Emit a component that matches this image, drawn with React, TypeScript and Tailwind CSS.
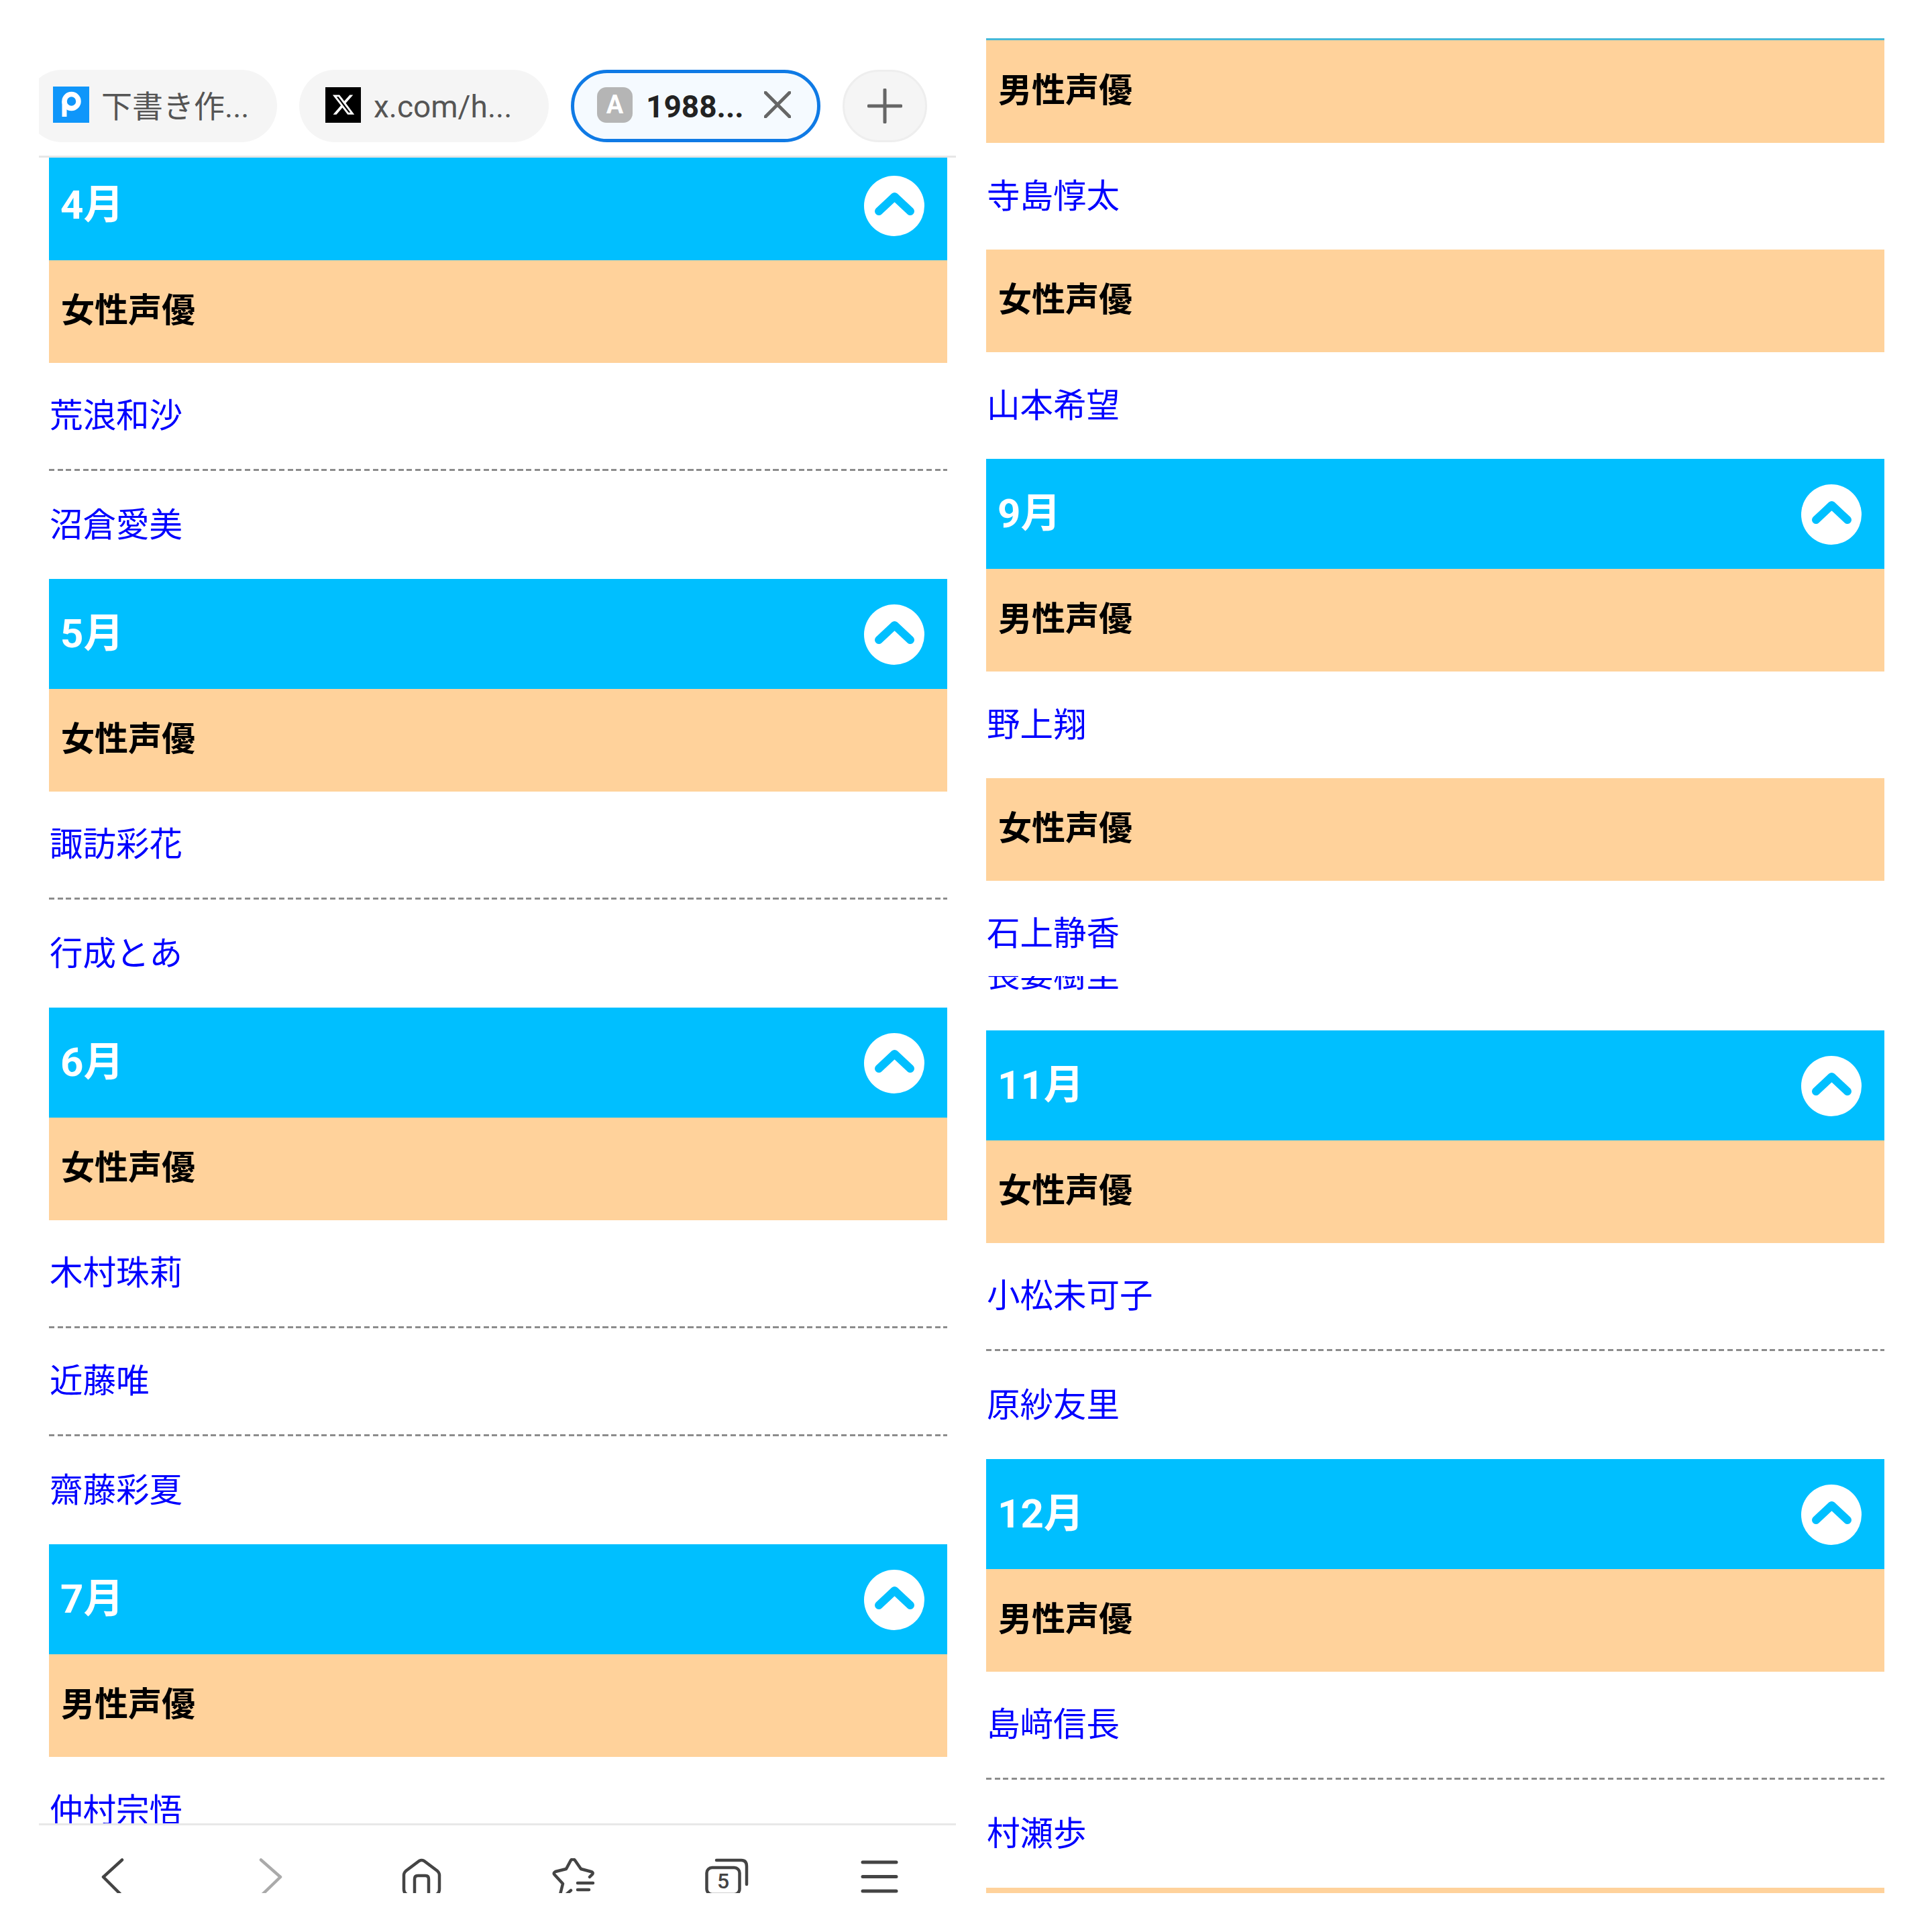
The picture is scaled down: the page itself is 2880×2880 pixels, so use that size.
import React from "react";

function Month({ label }: { label: string }) {
  return (
    <div className="h-[164px] shrink-0 bg-[#00bfff] flex items-center justify-between pl-[17px] pr-[34px]">
      <span className="text-[60px] leading-none font-bold text-white -mt-[1px]">{label}</span>
      <div className="w-[90px] h-[90px] mt-[2px] rounded-full bg-white">
        <svg viewBox="0 0 90 90" className="w-[90px] h-[90px]">
          <path d="M22 53 L45.5 31 L69 53" fill="none" stroke="#00bfff" strokeWidth="12" strokeLinecap="round" strokeLinejoin="round" />
        </svg>
      </div>
    </div>
  );
}

function Category({ label, className = "" }: { label: string; className?: string }) {
  return (
    <div className={`h-[153px] shrink-0 bg-[#ffd29b] flex items-center pl-[18px] ${className}`}>
      <span className="text-[50px] leading-none font-bold text-black -mt-[3px]">{label}</span>
    </div>
  );
}

function Name({ label, dashed = false, className = "h-[161px]" }: { label: string; dashed?: boolean; className?: string }) {
  return (
    <div className={`shrink-0 flex flex-col ${className}`}>
      <div className="flex-1 flex items-center pl-[1px]">
        <span className="text-[49.5px] leading-none text-[#0000ff] mt-[2px]">{label}</span>
      </div>
      {dashed && <div className="h-[3px] bg-[repeating-linear-gradient(90deg,#8c8c8c_0,#8c8c8c_8px,transparent_8px,transparent_12.7px)]" />}
    </div>
  );
}

function Tabs() {
  return (
    <div className="h-[235px] shrink-0 pt-[104px] border-b-[3px] border-[#e6e6e6] overflow-hidden">
      <div className="flex h-[108px] gap-[33px] -ml-[19px]">
        <div className="w-[374px] shrink-0 rounded-[54px] bg-[#f5f5f5] flex items-center pl-[40px] gap-[18px]">
          <svg viewBox="0 0 54 54" className="w-[54px] h-[54px] -mt-[4px] shrink-0">
            <rect width="54" height="54" fill="#0f96fa" />
            <circle cx="27.5" cy="22" r="10.5" fill="none" stroke="#ffffff" strokeWidth="7.5" />
            <path d="M17 22 V45" stroke="#ffffff" strokeWidth="7" />
          </svg>
          <span className="text-[46px] leading-none text-[#555555] mt-[2px]">下書き作...</span>
        </div>
        <div className="w-[372px] shrink-0 rounded-[54px] bg-[#f5f5f5] flex items-center pl-[39px] gap-[19px]">
          <div className="w-[53px] h-[53px] -mt-[4px] shrink-0 bg-black flex items-center justify-center">
            <svg viewBox="0 0 24 24" className="w-[36px] h-[36px]" fill="#ffffff">
              <path d="M18.244 2.25h3.308l-7.227 8.26 8.502 11.24H16.17l-5.214-6.817L4.99 21.75H1.68l7.73-8.835L1.254 2.25H8.08l4.713 6.231zm-1.161 17.52h1.833L7.084 4.126H5.117z" />
            </svg>
          </div>
          <span className="text-[46px] leading-none text-[#555555] mt-[2px]">x.com/h...</span>
        </div>
        <div className="w-[372px] shrink-0 rounded-[54px] bg-[#f5faff] border-[5px] border-[#0f7ae5] flex items-center pl-[34px] gap-[20px]">
          <div className="w-[53px] h-[53px] -mt-[4px] shrink-0 rounded-[14px] bg-[#b5b5b5] flex items-center justify-center text-[38px] leading-none font-bold text-white">A</div>
          <span className="w-[156px] text-[46px] leading-none font-bold text-[#222222] mt-[2px]">1988...</span>
          <svg viewBox="0 0 40 40" className="w-[40px] h-[40px] -mt-[4px] shrink-0">
            <path d="M2 2 L38 38 M38 2 L2 38" stroke="#666666" strokeWidth="5" strokeLinecap="round" />
          </svg>
        </div>
        <div className="w-[126px] shrink-0 rounded-[54px] bg-[#f5f5f5] border-[3px] border-[#eeeeee] flex items-center justify-center">
          <svg viewBox="0 0 52 52" className="w-[52px] h-[52px]">
            <path d="M26 2 V50 M2 26 H50" stroke="#666666" strokeWidth="5" strokeLinecap="round" />
          </svg>
        </div>
      </div>
    </div>
  );
}

function BottomBar() {
  return (
    <div className="flex-1 border-t-[3px] border-[#e8e8e8] pt-[49px]">
      <div className="grid grid-cols-6 justify-items-center">
        <svg viewBox="0 0 64 52" className="w-[64px] h-[52px]">
          <path d="M42 2.5 L14 28 L42 56" fill="none" stroke="#444444" strokeWidth="4.5" strokeLinecap="round" strokeLinejoin="round" />
        </svg>
        <svg viewBox="0 0 64 52" className="w-[64px] h-[52px]">
          <path d="M21 2.5 L50 28 L21 56" fill="none" stroke="#aaaaaa" strokeWidth="4.5" strokeLinecap="round" strokeLinejoin="round" />
        </svg>
        <svg viewBox="0 0 64 52" className="w-[64px] h-[52px]">
          <path d="M6 46 V25 Q6 22 9 19 L29 4 Q32.5 2 36 4 L56 19 Q59 22 59 25 V46 Q59 54 51 55 H14 Q6 54 6 46 Z M22 56 V31 Q22 26 27 26 H38 Q43 26 43 31 V56" fill="none" stroke="#444444" strokeWidth="4.5" />
        </svg>
        <svg viewBox="0 0 64 52" className="w-[64px] h-[52px]">
          <path d="M56 28 L60 24 Q62 21 58 20 L43 16 L34 3 Q31 0 28 3 L21 16 L5 20 Q1 22 4 25 L16 38 L12 54 M28 48 L21 54 M38 37 H61 M38 47 H55" fill="none" stroke="#444444" strokeWidth="4.5" strokeLinecap="round" strokeLinejoin="round" />
        </svg>
        <svg viewBox="0 0 68 52" className="w-[68px] h-[52px]">
          <rect x="4.5" y="14" width="49" height="40" rx="8" fill="none" stroke="#444444" strokeWidth="4.5" />
          <path d="M19 3 H56 Q64 3 64 12 V39" fill="none" stroke="#444444" strokeWidth="4.5" strokeLinecap="round" />
          <text x="29" y="45" textAnchor="middle" fontSize="32" fontWeight="500" fill="#444444">5</text>
        </svg>
        <svg viewBox="0 0 64 52" className="w-[64px] h-[52px]">
          <path d="M7 6 H57 M7 27.5 H57 M7 49 H57" stroke="#444444" strokeWidth="5" strokeLinecap="round" />
        </svg>
      </div>
    </div>
  );
}

export default function App() {
  return (
    <div className="w-[2880px] h-[2880px] bg-white flex font-['Roboto','Noto_Sans_CJK_JP',sans-serif]">
      {/* left screenshot */}
      <div className="ml-[58px] w-[1367px] h-[2880px] flex flex-col">
        <Tabs />
        <div className="h-[2483px] shrink-0 overflow-hidden pl-[15px] pr-[13px]">
          <div className="-mt-[11px] flex flex-col">
            <Month label="4月" />
            <Category label="女性声優" />
            <Name label="荒浪和沙" dashed />
            <Name label="沼倉愛美" />
            <Month label="5月" />
            <Category label="女性声優" />
            <Name label="諏訪彩花" dashed />
            <Name label="行成とあ" />
            <Month label="6月" />
            <Category label="女性声優" />
            <Name label="木村珠莉" dashed />
            <Name label="近藤唯" dashed />
            <Name label="齋藤彩夏" />
            <Month label="7月" />
            <Category label="男性声優" />
            <Name label="仲村宗悟" />
          </div>
        </div>
        <BottomBar />
      </div>

      {/* right screenshot */}
      <div className="ml-[45px] w-[1339px] pt-[57px] flex flex-col">
        <Category label="男性声優" className="border-t-[3px] border-[#45b8d8] h-[156px]" />
        <Name label="寺島惇太" className="h-[159px]" />
        <Category label="女性声優" />
        <Name label="山本希望" className="h-[159px]" />
        <Month label="9月" />
        <Category label="男性声優" />
        <Name label="野上翔" className="h-[159px]" />
        <Category label="女性声優" />
        <Name label="石上静香" className="h-[142px] pt-[16px]" />
        <div className="h-[22px] shrink-0 overflow-hidden flex items-end pl-[1px]">
          <span className="text-[49.5px] leading-none text-[#0000ff] translate-y-[2px]">長妻樹里</span>
        </div>
        <div className="h-[59px] shrink-0" />
        <Month label="11月" />
        <Category label="女性声優" />
        <Name label="小松未可子" dashed />
        <Name label="原紗友里" />
        <Month label="12月" />
        <Category label="男性声優" />
        <Name label="島﨑信長" dashed />
        <Name label="村瀬歩" />
        <div className="h-[8px] shrink-0 bg-[#ffd29b]" />
      </div>
    </div>
  );
}
